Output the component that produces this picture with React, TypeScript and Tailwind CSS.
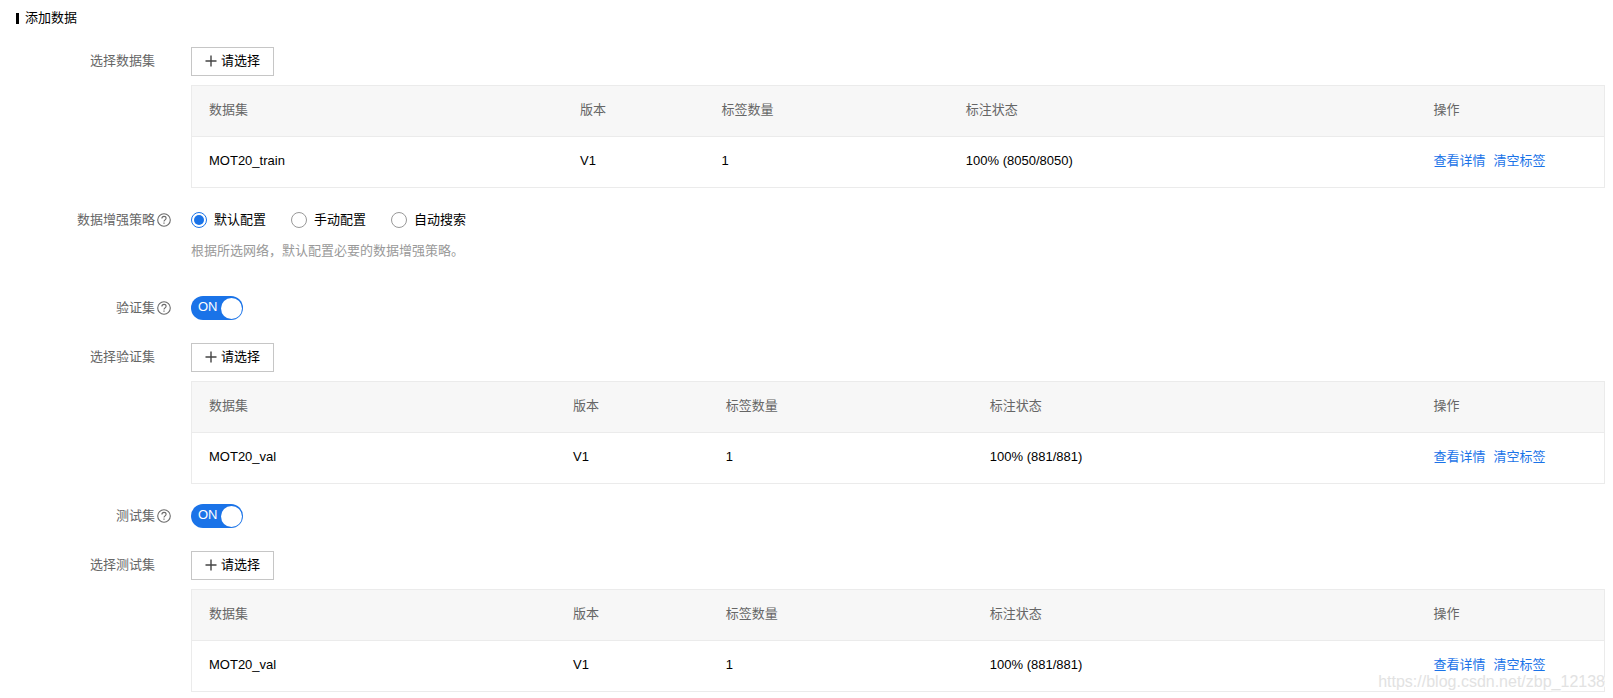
import { useId, useState } from "react";
import type { ReactNode } from "react";

type Dataset = { name: string; version: string; labels: string; status: string };

const WIDE_COLUMNS = ["w-[26.3%]", "w-[10%]", "w-[17.3%]", "w-[33.1%]", "w-[13.3%]"];
const EVEN_COLUMNS = ["w-[25.8%]", "w-[10.8%]", "w-[18.7%]", "w-[31.4%]", "w-[13.3%]"];
const HEADINGS = ["数据集", "版本", "标签数量", "标注状态", "操作"];
const STRATEGIES = ["默认配置", "手动配置", "自动搜索"];

function HelpIcon() {
  return (
    <svg viewBox="0 0 14 14" className="size-3.5" fill="none" stroke="#6b6b6b" aria-hidden="true">
      <circle cx="7" cy="7" r="6.3" strokeWidth="1.1" />
      <path d="M4.9 5.5C4.9 4.2 5.8 3.4 7 3.4s2.1.8 2.1 1.9c0 1.5-2.1 1.6-2.1 3.2" strokeWidth="1.1" />
      <path d="M7 9.6v1.2" strokeWidth="1.2" />
    </svg>
  );
}

function PlusIcon() {
  return (
    <svg viewBox="0 0 12 12" className="size-3" stroke="#444444" strokeWidth="1.4" aria-hidden="true">
      <path d="M0.5 6h11M6 0.5v11" />
    </svg>
  );
}

function FormRow({ label, help, children }: { label: ReactNode; help?: boolean; children: ReactNode }) {
  return (
    <div className="flex items-start gap-5">
      <div className="flex h-6 w-[171px] shrink-0 items-center justify-end gap-0.5 text-[#666666]">
        {label}
        <span className="w-3.5">{help && <HelpIcon />}</span>
      </div>
      <div className="min-w-0 flex-1">{children}</div>
    </div>
  );
}

function DatasetTable({ rows, columns }: { rows: Dataset[]; columns: string[] }) {
  return (
    <table className="mt-[9px] w-full table-fixed border-collapse border border-[#ebebeb] text-left">
      <thead className="bg-[#f7f7f7] text-[#666666]">
        <tr className="h-[51px] border-b border-[#ebebeb]">
          {HEADINGS.map((heading, i) => (
            <th key={heading} scope="col" className={`${columns[i]} px-[17px] pt-0 pb-0.5 font-normal`}>
              {heading}
            </th>
          ))}
        </tr>
      </thead>
      <tbody>
        {rows.map((row) => (
          <tr key={row.name} className="h-[51px]">
            <td className="px-[17px] pt-0 pb-0.5">{row.name}</td>
            <td className="px-[17px] pt-0 pb-0.5">{row.version}</td>
            <td className="px-[17px] pt-0 pb-0.5">{row.labels}</td>
            <td className="px-[17px] pt-0 pb-0.5">{row.status}</td>
            <td className="px-[17px] pt-0 pb-0.5">
              <div className="flex gap-2 whitespace-nowrap text-[#1a73e8]">
                <a href="#detail">查看详情</a>
                <a href="#clear">清空标签</a>
              </div>
            </td>
          </tr>
        ))}
      </tbody>
    </table>
  );
}

function DatasetField({ label, rows, columns }: { label: string; rows: Dataset[]; columns: string[] }) {
  const id = useId();
  return (
    <FormRow label={<label htmlFor={id} className="pt-1">{label}</label>}>
      <button
        id={id}
        type="button"
        className="flex h-[29px] items-center gap-1 border border-[#c6c6c6] bg-white px-[13px] pb-0.5 text-black"
      >
        <PlusIcon />
        请选择
      </button>
      <DatasetTable rows={rows} columns={columns} />
    </FormRow>
  );
}

function SwitchField({ label }: { label: string }) {
  const id = useId();
  const [on, setOn] = useState(true);
  return (
    <FormRow label={<label htmlFor={id}>{label}</label>} help>
      <label
        className={`flex h-6 w-[52px] cursor-pointer items-center justify-between rounded-full pr-px pl-[7px] text-white ${on ? "bg-[#1a73e8]" : "flex-row-reverse bg-[#adb0b8]"}`}
      >
        <input
          id={id}
          type="checkbox"
          role="switch"
          checked={on}
          onChange={() => setOn(!on)}
          className="sr-only"
        />
        <span className="pb-0.5">{on ? "ON" : "OFF"}</span>
        <span className="size-[21px] rounded-full bg-white" />
      </label>
    </FormRow>
  );
}

export default function App() {
  const [strategy, setStrategy] = useState(STRATEGIES[0]);
  const validation = [{ name: "MOT20_val", version: "V1", labels: "1", status: "100% (881/881)" }];

  return (
    <main className="relative bg-white pt-2 pr-2 pb-[6px] text-[13px] leading-5 text-black [font-family:'Liberation_Sans','Noto_Sans_CJK_SC',sans-serif]">
      <h2 className="flex h-5 items-center gap-1.5 pl-4">
        <span className="h-[11px] w-[3px] bg-black" />
        添加数据
      </h2>

      <div className="mt-[19px]">
        <DatasetField
          label="选择数据集"
          columns={WIDE_COLUMNS}
          rows={[{ name: "MOT20_train", version: "V1", labels: "1", status: "100% (8050/8050)" }]}
        />
      </div>

      <div className="mt-5">
        <FormRow label={<span id="strategy-label">数据增强策略</span>} help>
          <div role="radiogroup" aria-labelledby="strategy-label" className="flex h-6 items-center gap-[25px]">
            {STRATEGIES.map((name) => (
              <label key={name} className="flex items-center gap-[7px]">
                <input
                  type="radio"
                  name="strategy"
                  checked={strategy === name}
                  onChange={() => setStrategy(name)}
                  className="size-4 appearance-none rounded-full border border-[#999999] bg-white bg-clip-content p-[2px] checked:border-[#1a73e8] checked:bg-[#1a73e8]"
                />
                {name}
              </label>
            ))}
          </div>
          <p className="mt-[9px] text-[#999999]">根据所选网络，默认配置必要的数据增强策略。</p>
        </FormRow>
      </div>

      <div className="mt-[35px] flex flex-col gap-[23px]">
        <SwitchField label="验证集" />
        <DatasetField label="选择验证集" columns={EVEN_COLUMNS} rows={validation} />
      </div>

      <div className="mt-5 flex flex-col gap-[23px]">
        <SwitchField label="测试集" />
        <DatasetField label="选择测试集" columns={EVEN_COLUMNS} rows={validation} />
      </div>

      <span className="pointer-events-none absolute right-2 bottom-1.5 text-base leading-5 text-[#e2e2e2] [text-shadow:1px_1px_0_#ffffff]">
        https://blog.csdn.net/zbp_12138
      </span>
    </main>
  );
}
